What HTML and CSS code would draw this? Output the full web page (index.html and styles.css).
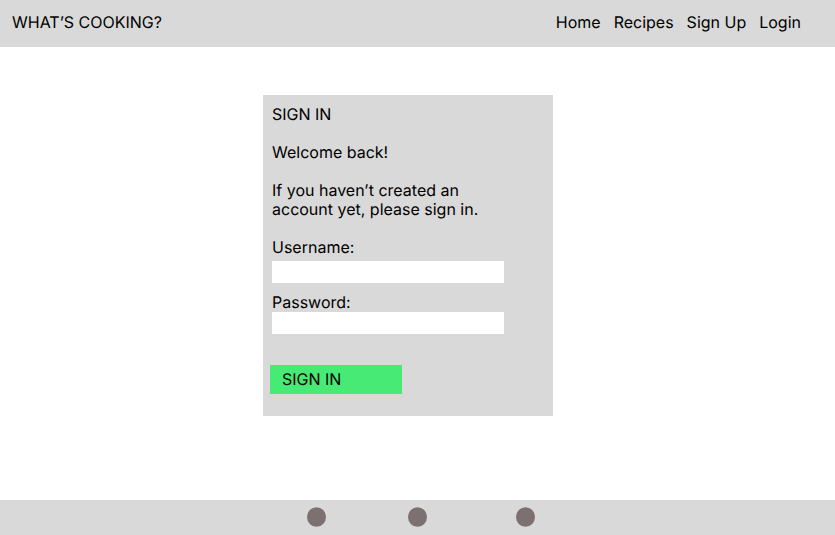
FILE: index.html
```html
<!DOCTYPE html>
<html lang="en">
<head>
  <meta charset="utf-8">
  <meta name="viewport" content="width=device-width, initial-scale=1">
  <title>What’s Cooking?</title>
  <link rel="stylesheet" href="styles.css">
</head>
<body>
  <header class="site-header">
    <a class="brand" href="#">WHAT’S COOKING?</a>
    <nav class="site-nav">
      <a href="#">Home</a>
      <a href="#">Recipes</a>
      <a href="#">Sign Up</a>
      <a href="#">Login</a>
    </nav>
  </header>
  <main class="content">
    <form class="card">
      <h1 class="card-title">SIGN IN</h1>
      <p>Welcome back!</p>
      <p>If you haven’t created an account yet, please sign in.</p>
      <div class="field">
        <label for="username">Username:</label>
        <input id="username" type="text">
      </div>
      <div class="field field-password">
        <label for="password">Password:</label>
        <input id="password" type="password">
      </div>
      <button class="submit" type="submit">SIGN IN</button>
    </form>
  </main>
  <footer class="site-footer">
    <svg class="dot" viewBox="0 0 19 20"><ellipse cx="9.5" cy="10" rx="9.5" ry="9.8"/></svg>
    <svg class="dot" viewBox="0 0 19 20"><ellipse cx="9.5" cy="10" rx="9.5" ry="9.8"/></svg>
    <svg class="dot" viewBox="0 0 19 20"><ellipse cx="9.5" cy="10" rx="9.5" ry="9.8"/></svg>
  </footer>
</body>
</html>
```
FILE: styles.css
```css
* {
  box-sizing: border-box;
}

body {
  display: flex;
  flex-direction: column;
  min-height: 100vh;
  margin: 0;
  background: #fff;
  color: #000;
  font: 16px/19px Inter, sans-serif;
  text-rendering: geometricPrecision;
}

a {
  color: inherit;
  text-decoration: none;
}

.site-header {
  display: flex;
  justify-content: space-between;
  padding: 13px 34px 15px 12px;
  background: #d9d9d9;
}

.site-nav {
  display: flex;
  gap: 13px;
}

.content {
  flex: 1;
  padding: 48px 19px 48px 0;
}

.card {
  width: 290px;
  margin: 0 auto;
  padding: 10px 49px 22px 9px;
  background: #d9d9d9;
}

.card-title,
.card p {
  margin: 0 0 19px;
  font-size: 16px;
  font-weight: 400;
}

.field {
  display: flex;
  flex-direction: column;
  gap: 4px;
}

.field-password {
  gap: 0;
  margin-top: 10px;
}

.field input {
  width: 100%;
  height: 22px;
  padding: 0 6px;
  border: 0;
  border-radius: 0;
  background: #fff;
  font: inherit;
}

.submit {
  width: 132px;
  margin: 31px 0 0 -2px;
  padding: 5px 12px;
  border: 0;
  background: #47ea74;
  color: inherit;
  font: inherit;
  text-align: left;
  text-rendering: inherit;
}

.site-footer {
  display: grid;
  grid-template-columns: 101px 108px 19px;
  justify-content: center;
  padding: 7px 0 8px 7px;
  background: #d9d9d9;
}

.dot {
  width: 19px;
  height: 20px;
  fill: #7d7070;
}
```
